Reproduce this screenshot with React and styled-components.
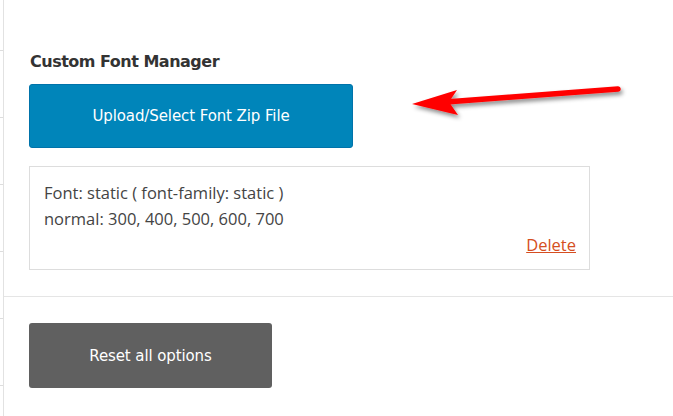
import styled, { createGlobalStyle } from "styled-components";

const GlobalStyle = createGlobalStyle`
  html, body {
    margin: 0;
    padding: 0;
    background: #ffffff;
  }
  body {
    font-family: "Open Sans", "Noto Sans", sans-serif;
    color: #444444;
  }
`;

export default function App() {
  return (
    <Page>
      <GlobalStyle />
      <Sidebar>
        {[0, 1, 2, 3, 4, 5].map((i) => (
          <SideRow key={i} first={i === 0} />
        ))}
      </Sidebar>
      <Main>
        <Section>
          <Heading>Custom Font Manager</Heading>
          <UploadButton>Upload/Select Font Zip File</UploadButton>
          <FontBox>
            <FontLine>Font: static ( font-family: static )</FontLine>
            <FontLine>normal: 300, 400, 500, 600, 700</FontLine>
            <DeleteRow>
              <DeleteLink href="#">Delete</DeleteLink>
            </DeleteRow>
          </FontBox>
        </Section>
        <Footer>
          <ResetButton>Reset all options</ResetButton>
        </Footer>
      </Main>
      <Arrow width="240" height="60" viewBox="0 0 240 60">
        <defs>
          <filter id="shadow" x="-20%" y="-50%" width="140%" height="200%">
            <feDropShadow dx="2" dy="3" stdDeviation="2" floodColor="#000" floodOpacity="0.45" />
          </filter>
        </defs>
        <g filter="url(#shadow)" fill="#ff0000" stroke="#ff0000">
          <line x1="46" y1="32" x2="218" y2="19" strokeWidth="5.5" strokeLinecap="round" />
          <polygon points="12,34 57,20 49,32 58,45" strokeWidth="0" />
        </g>
      </Arrow>
    </Page>
  );
}

const Page = styled.div`
  position: relative;
  display: flex;
  width: 673px;
  height: 416px;
  overflow: hidden;
`;

const Sidebar = styled.div`
  width: 3px;
  display: flex;
  flex-direction: column;
`;

const SideRow = styled.div`
  height: ${(p) => (p.first ? "50px" : "66px")};
  flex-shrink: 0;
  border-bottom: 1px solid #dddddd;
`;

const Main = styled.div`
  flex: 1;
  border-left: 1px solid #e2e2e2;
  display: flex;
  flex-direction: column;
`;

const Section = styled.div`
  padding: 52px 0 26px 25px;
  border-bottom: 1px solid #e5e5e5;
`;

const Heading = styled.h3`
  margin: 0 0 12px 1px;
  font-family: "DejaVu Sans", sans-serif;
  font-size: 16px;
  font-weight: bold;
  letter-spacing: -0.5px;
  color: #333333;
  line-height: 20px;
`;

const BaseButton = styled.button`
  display: flex;
  align-items: center;
  justify-content: center;
  border: none;
  border-radius: 3px;
  color: #ffffff;
  font-family: "DejaVu Sans", sans-serif;
  font-size: 15px;
  letter-spacing: -0.1px;
  cursor: pointer;
`;

const UploadButton = styled(BaseButton)`
  width: 324px;
  height: 64px;
  background: #0085ba;
  border: 1px solid #0073aa;
  margin-bottom: 18px;
`;

const FontBox = styled.div`
  width: 561px;
  height: 104px;
  box-sizing: border-box;
  border: 1px solid #dddddd;
  padding: 13px 13px 0 14px;
  display: flex;
  flex-direction: column;
`;

const FontLine = styled.div`
  font-size: 16.5px;
  line-height: 26px;
  color: #444444;
`;

const DeleteRow = styled.div`
  display: flex;
  justify-content: flex-end;
`;

const DeleteLink = styled.a`
  font-size: 16.5px;
  line-height: 26px;
  color: #d54e21;
  text-decoration: underline;
`;

const Footer = styled.div`
  padding: 26px 0 0 25px;
`;

const ResetButton = styled(BaseButton)`
  width: 243px;
  height: 65px;
  background: #606060;
`;

const Arrow = styled.svg`
  position: absolute;
  left: 400px;
  top: 70px;
  overflow: visible;
`;
